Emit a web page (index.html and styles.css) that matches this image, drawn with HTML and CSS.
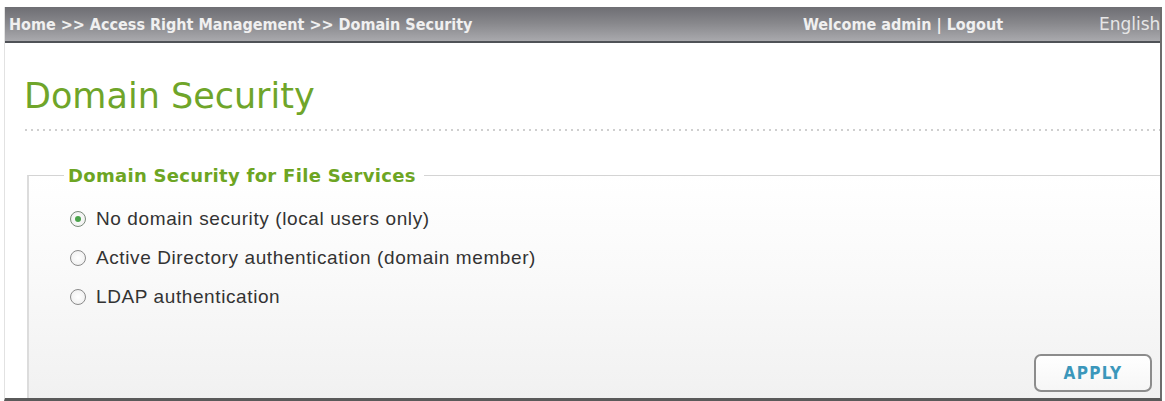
FILE: index.html
```html
<!DOCTYPE html>
<html>
<head>
<meta charset="utf-8">
<link rel="stylesheet" href="styles.css">
</head>
<body>
<div class="frame">
  <div class="topbar">
    <div class="crumbs">Home &gt;&gt; Access Right Management &gt;&gt; Domain Security</div>
    <div class="welcome">Welcome admin | Logout</div>
    <div class="lang">English</div>
  </div>
  <div class="content">
    <h1 class="title">Domain Security</h1>
    <div class="dots"></div>
    <fieldset class="group">
      <legend class="legend">Domain Security for File Services</legend>
      <div class="options">
        <label class="opt"><span class="radio checked"></span>No domain security (local users only)</label>
        <label class="opt"><span class="radio"></span>Active Directory authentication (domain member)</label>
        <label class="opt"><span class="radio"></span>LDAP authentication</label>
      </div>
      <div class="actions">
        <button class="apply">APPLY</button>
      </div>
    </fieldset>
  </div>
</div>
</body>
</html>
```

FILE: styles.css
```css
html, body {
  margin: 0;
  padding: 0;
  background: #ffffff;
  overflow: hidden;
}
.frame {
  margin: 7px 0 0 4px;
  width: 1155px;
  height: 391px;
  border-left: 1px solid #e2e2e2;
  border-right: 2px solid #6d6d6d;
  border-bottom: 3px solid #5a5a5a;
  display: flex;
  flex-direction: column;
  overflow: hidden;
}
.topbar {
  height: 34px;
  flex: none;
  display: flex;
  align-items: center;
  background: linear-gradient(to bottom, #6e6e73 0%, #86868a 45%, #a9a9ad 100%);
  border-bottom: 2px solid #4f5257;
  font-family: "DejaVu Sans Condensed", "DejaVu Sans", sans-serif;
  font-weight: bold;
  color: #f0f0f0;
  font-size: 16px;
  white-space: nowrap;
  overflow: hidden;
}
.crumbs {
  padding-left: 4px;
  width: 794px;
  flex: none;
}
.welcome {
  width: 296px;
  flex: none;
}
.lang {
  font-weight: normal;
  font-family: "DejaVu Sans", sans-serif;
  font-size: 17px;
  color: #e6e6e6;
}
.content {
  flex: 1;
  display: flex;
  flex-direction: column;
  min-height: 0;
}
.title {
  margin: 31px 0 0 19px;
  font-family: "DejaVu Sans", sans-serif;
  font-weight: normal;
  font-size: 35px;
  line-height: 44px;
  color: #6fa52a;
}
.dots {
  margin: 11px 0 0 20px;
  height: 2px;
  background-image: linear-gradient(to right, #cfcfcf 2px, transparent 2px);
  background-size: 6px 2px;
}
.group {
  flex: 1;
  margin: 34px 0 0 22px;
  padding: 0;
  border: 0;
  border-top: 1px solid #d4d4d4;
  border-left: 2px solid #dcdcdc;
  background: linear-gradient(to bottom, #ffffff 0%, #fafafa 40%, #f1f1f1 100%);
  display: flex;
  flex-direction: column;
  min-height: 0;
}
.legend {
  margin-left: 35px;
  padding: 0 8px 0 4px;
  font-family: "DejaVu Sans", sans-serif;
  font-weight: bold;
  font-size: 18px;
  letter-spacing: 0.3px;
  color: #6da523;
}
.options {
  display: flex;
  flex-direction: column;
  gap: 17px;
  padding: 22px 0 0 41px;
}
.opt {
  display: flex;
  align-items: center;
  gap: 10px;
  font-family: "Liberation Sans", Arial, sans-serif;
  font-size: 19px;
  letter-spacing: 0.6px;
  line-height: 22px;
  color: #333333;
}
.radio {
  width: 14px;
  height: 14px;
  border-radius: 50%;
  border: 1.5px solid #8a8a8a;
  background: radial-gradient(circle, #ffffff 0%, #ececec 100%);
  position: relative;
  flex: none;
}
.radio.checked {
  border-color: #7a8a7a;
}
.radio.checked::after {
  content: "";
  position: absolute;
  left: 4px;
  top: 4px;
  width: 6px;
  height: 6px;
  border-radius: 50%;
  background: #4aa34a;
}
.actions {
  margin-top: auto;
  display: flex;
  justify-content: flex-end;
  padding: 0 8px 6px 0;
}
.apply {
  width: 118px;
  height: 38px;
  border: 2px solid #8c8c8c;
  border-radius: 7px;
  background: linear-gradient(to bottom, #ffffff 0%, #f6f6f6 100%);
  font-family: "DejaVu Sans Condensed", "DejaVu Sans", sans-serif;
  font-weight: bold;
  font-size: 17px;
  color: #3b97bb;
  letter-spacing: 1.3px;
}
```
